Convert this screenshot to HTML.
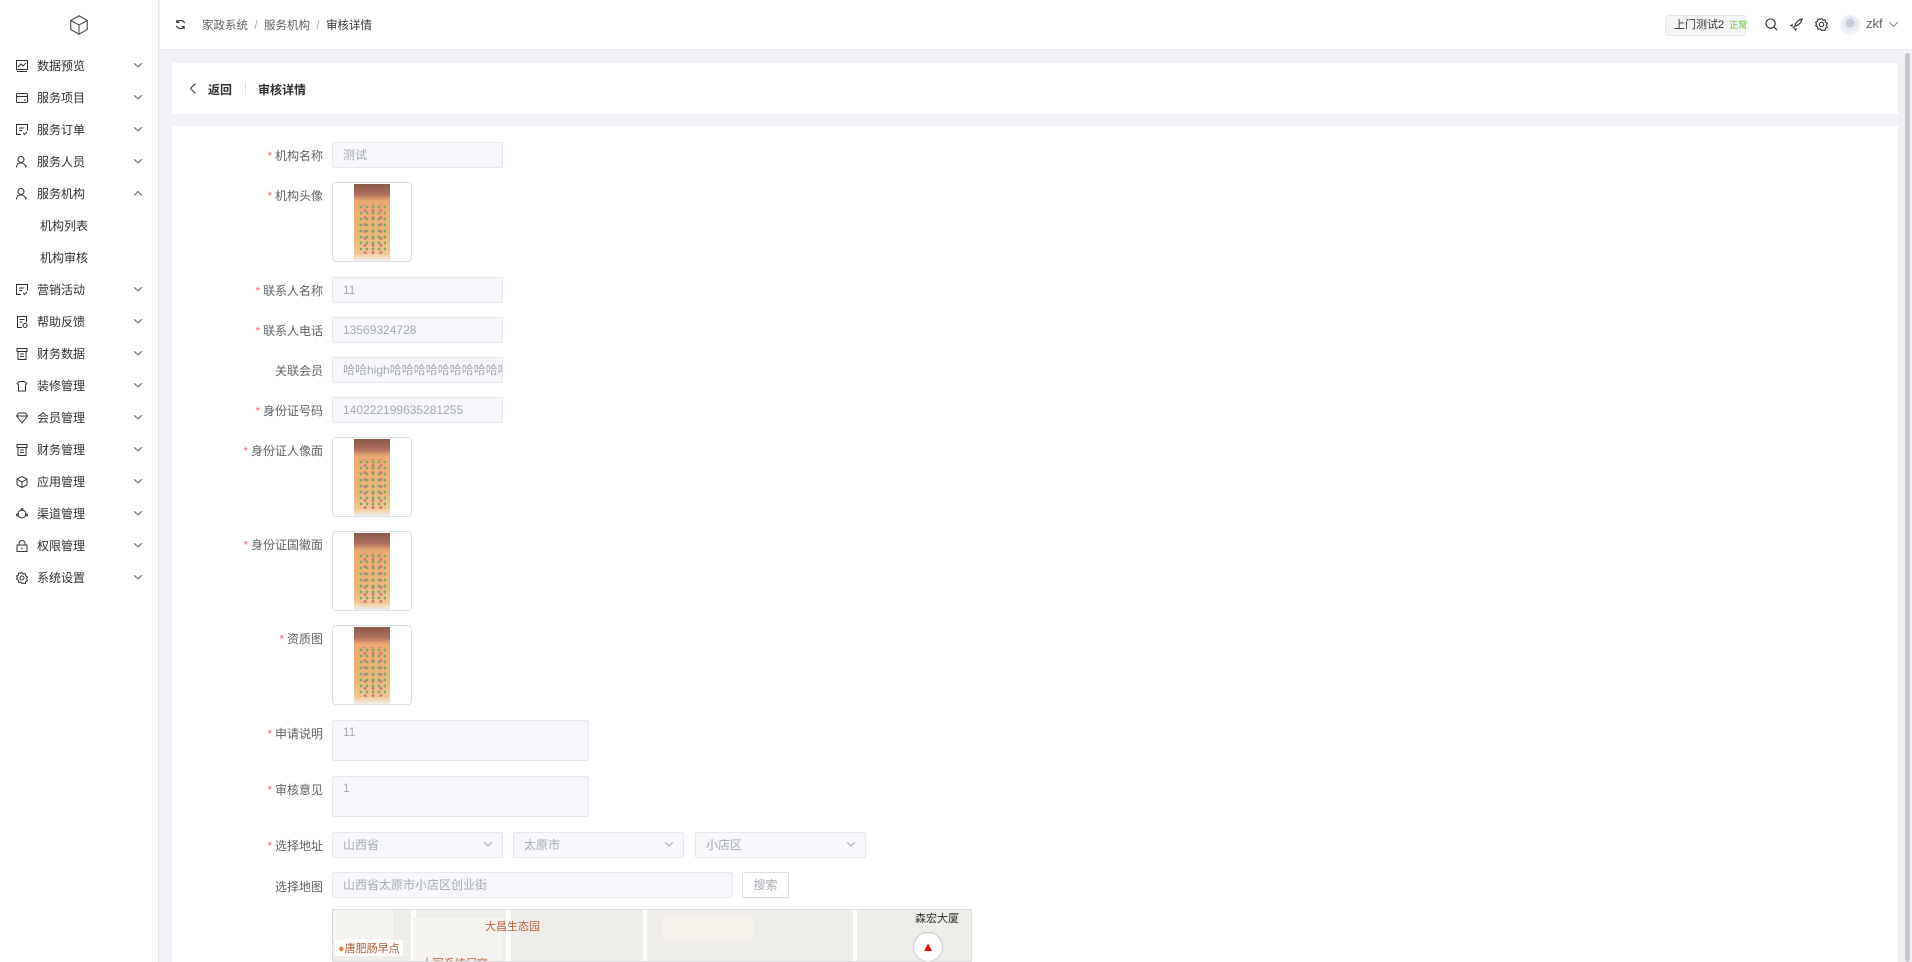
<!DOCTYPE html>
<html><head><meta charset="utf-8"><style>
*{box-sizing:border-box;margin:0;padding:0}
body{width:1912px;height:962px;overflow:hidden;font-family:"Liberation Sans","Noto Sans CJK SC",sans-serif;font-size:12px;color:#303133;background:#f0f2f5;position:relative}
.side{position:absolute;left:0;top:0;width:159px;height:962px;background:#fff;border-right:1px solid #e6e6e6}
.logo{position:absolute;left:79px;top:25px;transform:translate(-50%,-50%)}
.mi{position:absolute;left:0;width:159px;height:32px;line-height:32px;font-size:12px;color:#303133}
.mi svg.ic{position:absolute;left:16px;top:10px}
.mi span{position:absolute;left:37px}
.mi .ch{position:absolute;left:134px;top:13px}
.sub span{left:40px}
.hdr{position:absolute;left:160px;top:0;right:0;height:50px;background:#fff;border-bottom:1px solid #e8ecf2}
.t{position:absolute;white-space:nowrap}
.card{position:absolute;background:#fff}
.lab{position:absolute;right:1589px;font-size:12px;color:#606266;white-space:nowrap;text-align:right}
.lab b{color:#f56c6c;font-weight:normal;margin-right:3px}
.inp{position:absolute;left:332px;width:171px;height:26px;background:#f5f7fa;border:1px solid #e4e7ed;border-radius:2px;color:#a8abb2;font-size:12px;line-height:24px;padding-left:10px;white-space:nowrap;overflow:hidden}
.up{position:absolute;left:332px;width:80px;height:80px;border:1px solid #dcdfe6;border-radius:4px;background:#fff}
.up .im{position:absolute;left:21px;top:1px;width:36px;height:77px;background:linear-gradient(#8a5a4a 0,#b07060 14%,#e8a870 22%,#f0b070 40%,#e8b878 70%,#f3c890 90%,#eee 100%)}
.up .im:after{content:"";position:absolute;left:4px;top:20px;width:28px;height:50px;background-image:radial-gradient(circle,#7aa870 1.2px,transparent 1.6px),radial-gradient(circle,#d07090 1.2px,transparent 1.6px);background-size:6px 6px,8px 7px;background-position:0 0,3px 3px}
.sel svg{position:absolute;right:10px;top:9px}
</style></head><body>
<div class="side">
<svg class="logo" width="22" height="22" viewBox="0 0 24 24" fill="none" stroke="#555" stroke-width="1.3"><path d="M12 2l9 5v10l-9 5-9-5V7z"/><path d="M3 7l9 5 9-5M12 12v10"/></svg>
<div class="mi" style="top:50px"><svg class="ic" width="12" height="12" viewBox="0 0 12 12" fill="none" stroke="#333"><rect x=".5" y=".5" width="11" height="9"/><path d="M2 7l3-3 2 2 3-3M1 11.5h10"/></svg><span>数据预览</span><svg class="ch" width="8" height="5"><path d="M0 0l4 4 4-4" fill="none" stroke="#666"/></svg></div>
<div class="mi" style="top:82px"><svg class="ic" width="12" height="12" viewBox="0 0 12 12" fill="none" stroke="#333"><rect x=".5" y="1.5" width="11" height="9" rx="1"/><path d="M.5 4.5h11M8 8h2"/></svg><span>服务项目</span><svg class="ch" width="8" height="5"><path d="M0 0l4 4 4-4" fill="none" stroke="#666"/></svg></div>
<div class="mi" style="top:114px"><svg class="ic" width="12" height="12" viewBox="0 0 12 12" fill="none" stroke="#333"><path d="M5 10.5H.5v-10h11v6M3 4h5M3 6.5h3M7 9l1.5 1.5L11 8"/></svg><span>服务订单</span><svg class="ch" width="8" height="5"><path d="M0 0l4 4 4-4" fill="none" stroke="#666"/></svg></div>
<div class="mi" style="top:146px"><svg class="ic" width="12" height="12" viewBox="0 0 12 12" fill="none" stroke="#333"><circle cx="5" cy="3.5" r="3"/><path d="M.5 11.5c0-3 2-4.5 4.5-4.5s4.5 1.5 4.5 4.5M9 10h2"/></svg><span>服务人员</span><svg class="ch" width="8" height="5"><path d="M0 0l4 4 4-4" fill="none" stroke="#666"/></svg></div>
<div class="mi" style="top:178px"><svg class="ic" width="12" height="12" viewBox="0 0 12 12" fill="none" stroke="#333"><circle cx="5" cy="3.5" r="3"/><path d="M.5 11.5c0-3 2-4.5 4.5-4.5s4.5 1.5 4.5 4.5M9 10h2"/></svg><span>服务机构</span><svg class="ch" width="8" height="5"><path d="M0 4.5l4-4 4 4" fill="none" stroke="#666"/></svg></div>
<div class="mi sub" style="top:210px"><span>机构列表</span></div>
<div class="mi sub" style="top:242px"><span>机构审核</span></div>
<div class="mi" style="top:274px"><svg class="ic" width="12" height="12" viewBox="0 0 12 12" fill="none" stroke="#333"><path d="M5 10.5H.5v-10h11v6M3 4h5M3 6.5h3M7 9l1.5 1.5L11 8"/></svg><span>营销活动</span><svg class="ch" width="8" height="5"><path d="M0 0l4 4 4-4" fill="none" stroke="#666"/></svg></div>
<div class="mi" style="top:306px"><svg class="ic" width="12" height="12" viewBox="0 0 12 12" fill="none" stroke="#333"><path d="M6 11.5H1.5v-11h9v6M3.5 3.5h5M3.5 6h3"/><circle cx="9" cy="9.5" r="2"/></svg><span>帮助反馈</span><svg class="ch" width="8" height="5"><path d="M0 0l4 4 4-4" fill="none" stroke="#666"/></svg></div>
<div class="mi" style="top:338px"><svg class="ic" width="12" height="12" viewBox="0 0 12 12" fill="none" stroke="#333"><path d="M1 .5h10v3H1zM2 3.5v8h8v-8M4 6h4M4 8.5h4"/></svg><span>财务数据</span><svg class="ch" width="8" height="5"><path d="M0 0l4 4 4-4" fill="none" stroke="#666"/></svg></div>
<div class="mi" style="top:370px"><svg class="ic" width="12" height="12" viewBox="0 0 12 12" fill="none" stroke="#333"><path d="M1 3.5l2.5-2h5l2.5 2-1.5 1.5v6h-7V5z"/></svg><span>装修管理</span><svg class="ch" width="8" height="5"><path d="M0 0l4 4 4-4" fill="none" stroke="#666"/></svg></div>
<div class="mi" style="top:402px"><svg class="ic" width="12" height="12" viewBox="0 0 12 12" fill="none" stroke="#333"><path d="M.5 4l2-3h7l2 3L6 11z M.5 4h11"/></svg><span>会员管理</span><svg class="ch" width="8" height="5"><path d="M0 0l4 4 4-4" fill="none" stroke="#666"/></svg></div>
<div class="mi" style="top:434px"><svg class="ic" width="12" height="12" viewBox="0 0 12 12" fill="none" stroke="#333"><path d="M1 .5h10v3H1zM2 3.5v8h8v-8M4 6h4M4 8.5h4"/></svg><span>财务管理</span><svg class="ch" width="8" height="5"><path d="M0 0l4 4 4-4" fill="none" stroke="#666"/></svg></div>
<div class="mi" style="top:466px"><svg class="ic" width="12" height="12" viewBox="0 0 12 12" fill="none" stroke="#333"><path d="M6 .5l5 2.7v5.6L6 11.5 1 8.8V3.2z M1 3.2L6 6l5-2.8M6 6v5.5"/></svg><span>应用管理</span><svg class="ch" width="8" height="5"><path d="M0 0l4 4 4-4" fill="none" stroke="#666"/></svg></div>
<div class="mi" style="top:498px"><svg class="ic" width="12" height="12" viewBox="0 0 12 12" fill="none" stroke="#333"><circle cx="6" cy="6" r="4"/><circle cx="6" cy="1.5" r="1"/><circle cx="1.5" cy="7" r="1"/><circle cx="10.5" cy="7" r="1"/></svg><span>渠道管理</span><svg class="ch" width="8" height="5"><path d="M0 0l4 4 4-4" fill="none" stroke="#666"/></svg></div>
<div class="mi" style="top:530px"><svg class="ic" width="12" height="12" viewBox="0 0 12 12" fill="none" stroke="#333"><rect x="1" y="5" width="10" height="6.5"/><path d="M3 5V3.5a3 3 0 016 0V5M6 7.5v2"/></svg><span>权限管理</span><svg class="ch" width="8" height="5"><path d="M0 0l4 4 4-4" fill="none" stroke="#666"/></svg></div>
<div class="mi" style="top:562px"><svg class="ic" width="12" height="12" viewBox="0 0 12 12" fill="none" stroke="#333"><circle cx="6" cy="6" r="2"/><path d="M6 .5l1.3 1.5 2-.3.3 2L11.5 5 10.5 6.8l1 1.7-1.9 1-.3 2-2-.3L6 11.5 4.7 10l-2 .3-.3-2L.5 7l1-1.2-1-1.8 1.9-1 .3-2 2 .3z"/></svg><span>系统设置</span><svg class="ch" width="8" height="5"><path d="M0 0l4 4 4-4" fill="none" stroke="#666"/></svg></div>
</div>

<div class="hdr">
<svg style="position:absolute;left:15px;top:19px" width="11" height="11" viewBox="0 0 12 12" fill="none" stroke="#333" stroke-width="1.2"><path d="M10.5 4.5A5 5 0 002 3.5M1.5 7.5A5 5 0 0010 8.5M2 1v2.7h2.7M10 11V8.3H7.3"/></svg>
<div class="t" style="left:42px;top:17px;color:#606266;font-size:11.5px">家政系统 &nbsp;<span style="color:#aaa">/</span>&nbsp; 服务机构 &nbsp;<span style="color:#aaa">/</span>&nbsp; <span style="color:#303133">审核详情</span></div>
<div class="t" style="left:1505px;top:15px;width:81px;height:21px;border:1px solid #e4e7ed;border-radius:3px;background:#f4f4f5;font-size:11px;line-height:19px;padding-left:8px;color:#303133">上门测试2 <span style="color:#67c23a;font-size:9px;margin-left:2px">正常</span></div>
<svg style="position:absolute;left:1605px;top:18px" width="13" height="13" viewBox="0 0 14 14" fill="none" stroke="#333" stroke-width="1.3"><circle cx="6" cy="6" r="5"/><path d="M10 10l3 3"/></svg>
<svg style="position:absolute;left:1630px;top:18px" width="13" height="13" viewBox="0 0 14 14" fill="none" stroke="#333" stroke-width="1.2"><path d="M5 9C6 5 9 2 13 1c-1 4-4 7-8 8zM5 9l-2 2M3 7L1 8l2 1M7 11l-1 2-1-2"/></svg>
<svg style="position:absolute;left:1655px;top:18px" width="13" height="13" viewBox="0 0 12 12" fill="none" stroke="#333"><circle cx="6" cy="6" r="2"/><path d="M6 .5l1.3 1.5 2-.3.3 2L11.5 5 10.5 6.8l1 1.7-1.9 1-.3 2-2-.3L6 11.5 4.7 10l-2 .3-.3-2L.5 7l1-1.2-1-1.8 1.9-1 .3-2 2 .3z"/></svg>
<div class="t" style="left:1680px;top:15px;width:20px;height:20px;border-radius:50%;background:radial-gradient(circle at 50% 40%,#c8cbd8 25%,#e6e8f0 30%,#eef0f5 60%)"></div>
<div class="t" style="left:1706px;top:16px;color:#606266;font-size:13px">zkf</div>
<svg style="position:absolute;left:1729px;top:22px" width="9" height="5"><path d="M0 0l4.5 4.5L9 0" fill="none" stroke="#888"/></svg>
</div>
<div style="position:absolute;left:1905px;top:53px;width:5px;height:909px;background:#c8c8c8;border-radius:3px"></div>

<div class="card" style="left:172px;top:63px;width:1726px;height:51px">
<svg style="position:absolute;left:18px;top:20px" width="6" height="11"><path d="M5.5 .5l-5 5 5 5" fill="none" stroke="#333"/></svg>
<div class="t" style="left:36px;top:18px;font-weight:bold;color:#303133">返回</div>
<div class="t" style="left:73px;top:19px;width:1px;height:13px;background:#dcdfe6"></div>
<div class="t" style="left:86px;top:18px;font-weight:bold;color:#303133">审核详情</div>
</div>

<div class="card" style="left:172px;top:126px;width:1726px;height:836px"></div>

<div class="lab" style="top:147px"><b>*</b>机构名称</div><div class="inp" style="top:142px">测试</div>
<div class="lab" style="top:187px"><b>*</b>机构头像</div><div class="up" style="top:182px"><div class="im"></div></div>
<div class="lab" style="top:282px"><b>*</b>联系人名称</div><div class="inp" style="top:277px">11</div>
<div class="lab" style="top:322px"><b>*</b>联系人电话</div><div class="inp" style="top:317px">13569324728</div>
<div class="lab" style="top:362px">关联会员</div><div class="inp" style="top:357px">哈哈high哈哈哈哈哈哈哈哈哈哈哈</div>
<div class="lab" style="top:402px"><b>*</b>身份证号码</div><div class="inp" style="top:397px">140222199635281255</div>
<div class="lab" style="top:442px"><b>*</b>身份证人像面</div><div class="up" style="top:437px"><div class="im"></div></div>
<div class="lab" style="top:536px"><b>*</b>身份证国徽面</div><div class="up" style="top:531px"><div class="im"></div></div>
<div class="lab" style="top:630px"><b>*</b>资质图</div><div class="up" style="top:625px"><div class="im"></div></div>
<div class="lab" style="top:725px"><b>*</b>申请说明</div><div class="inp" style="top:720px;width:257px;height:41px;line-height:22px">11</div>
<div class="lab" style="top:781px"><b>*</b>审核意见</div><div class="inp" style="top:776px;width:257px;height:41px;line-height:22px">1</div>
<div class="lab" style="top:837px"><b>*</b>选择地址</div>
<div class="inp sel" style="top:832px;width:171px">山西省<svg width="8" height="5"><path d="M0 0l4 4 4-4" fill="none" stroke="#aaa"/></svg></div>
<div class="inp sel" style="top:832px;left:513px;width:171px">太原市<svg width="8" height="5"><path d="M0 0l4 4 4-4" fill="none" stroke="#aaa"/></svg></div>
<div class="inp sel" style="top:832px;left:695px;width:171px">小店区<svg width="8" height="5"><path d="M0 0l4 4 4-4" fill="none" stroke="#aaa"/></svg></div>
<div class="lab" style="top:878px">选择地图</div><div class="inp" style="top:872px;width:401px">山西省太原市小店区创业街</div>
<div class="t" style="left:742px;top:872px;width:47px;height:26px;border:1px solid #dcdfe6;border-radius:2px;text-align:center;line-height:24px;color:#a8abb2">搜索</div>
<div class="t" style="left:332px;top:909px;width:640px;height:53px;background:#efedea;border:1px solid #ddd;overflow:hidden">
<div class="t" style="left:0;top:0;width:60px;height:30px;background:#f7f5f1"></div>
<div class="t" style="left:78px;top:0;width:5px;height:53px;background:#fff"></div>
<div class="t" style="left:173px;top:0;width:5px;height:53px;background:#fff"></div>
<div class="t" style="left:310px;top:0;width:4px;height:53px;background:#fff"></div>
<div class="t" style="left:520px;top:0;width:4px;height:53px;background:#fff"></div>
<div class="t" style="left:80px;top:8px;width:90px;height:45px;background:#f5f3ef"></div>
<div class="t" style="left:330px;top:5px;width:90px;height:25px;background:#f4f2ea"></div>
<div class="t" style="left:152px;top:8px;color:#c0603a;font-size:11px">大昌生态园</div>
<div class="t" style="left:2px;top:30px;color:#b05a30;font-size:11px;background:#fff;padding:0 3px"><span style="color:#f08040">●</span>唐肥肠早点</div>
<div class="t" style="left:82px;top:45px;color:#b05a30;font-size:11px"><span style="color:#f0a020">●</span>大军系统门窗</div>
<div class="t" style="left:582px;top:0;color:#333;font-size:11px">森宏大厦</div>
<div class="t" style="left:580px;top:22px;width:30px;height:30px;border-radius:50%;background:#fff;border:1px solid #ccc;color:#e00;text-align:center;line-height:28px;font-size:13px">▲</div>
</div>
</body></html>
